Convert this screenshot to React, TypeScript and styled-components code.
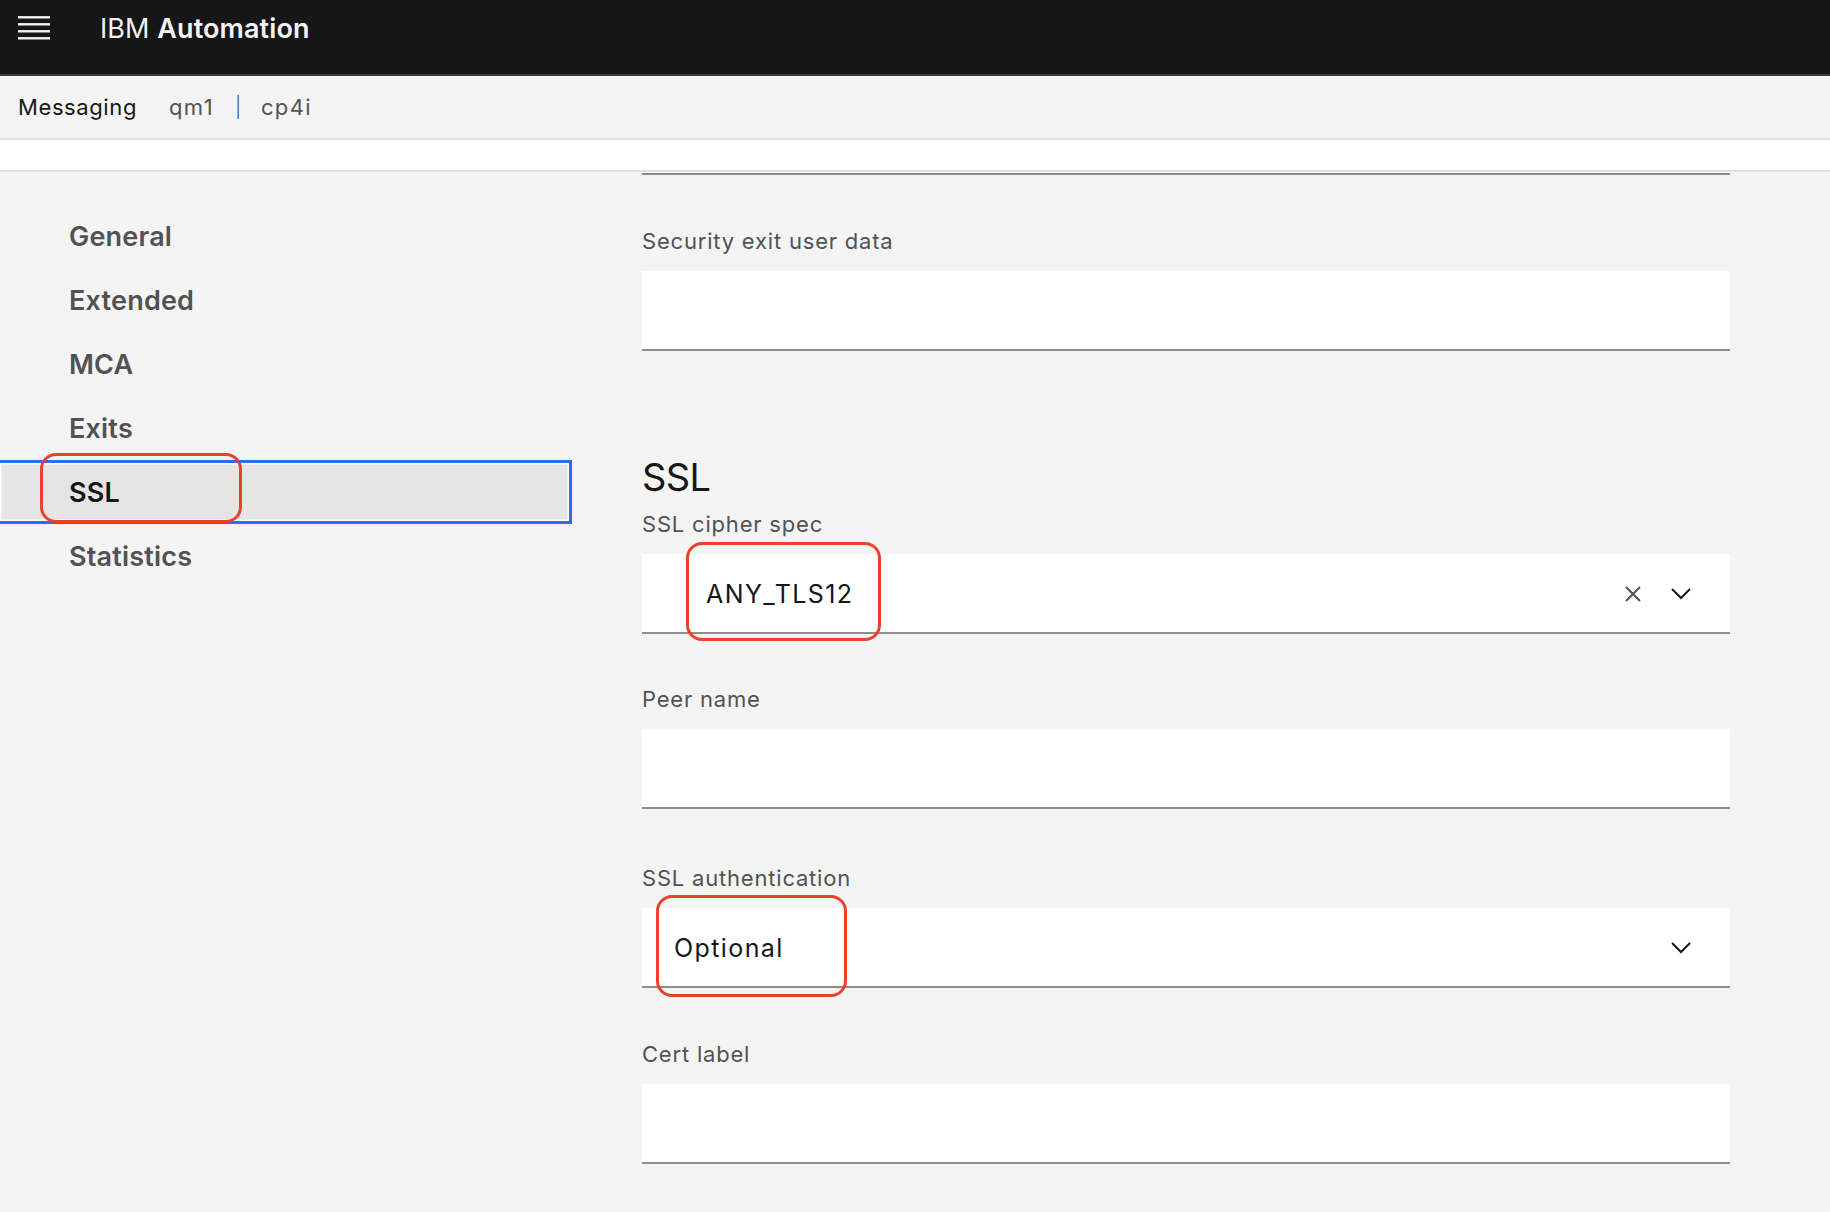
import React from "react";
import styled, { createGlobalStyle } from "styled-components";

const GlobalStyle = createGlobalStyle`
  html, body {
    margin: 0;
    padding: 0;
  }
  body {
    background: #f4f4f4;
    font-family: Inter, "Noto Sans", sans-serif;
    color: #161616;
  }
  * {
    box-sizing: border-box;
  }
`;

const Page = styled.div`
  width: 1830px;
  height: 1212px;
  overflow: hidden;
  display: flex;
  flex-direction: column;
  background: #f4f4f4;
`;

const Header = styled.header`
  flex: none;
  height: 76px;
  padding-bottom: 18px;
  background: #161616;
  border-bottom: 2px solid #393939;
  display: flex;
  align-items: center;
`;

const MenuIcon = styled.svg`
  margin-left: 18px;
  flex: none;
`;

const Brand = styled.div`
  margin-left: 50px;
  font-size: 27px;
  color: #f4f4f4;
  font-weight: 400;
  letter-spacing: 0.1px;

  strong {
    font-weight: 600;
  }
`;

const SubHeader = styled.div`
  flex: none;
  height: 64px;
  padding-left: 18px;
  border-bottom: 2px solid #e0e0e0;
  display: flex;
  align-items: center;
  font-size: 22px;
  letter-spacing: 0.6px;
`;

const Crumb = styled.span<{ $muted?: boolean }>`
  color: ${p => (p.$muted ? "#525252" : "#161616")};
  margin-right: ${p => (p.$muted ? "0" : "32px")};
  letter-spacing: ${p => (p.$muted ? "1.4px" : "0.6px")};
`;

const Pipe = styled.span`
  color: #525252;
  font-weight: 300;
  font-size: 20px;
  margin: 0 19px 0 21px;
`;

const Strip = styled.div`
  flex: none;
  height: 32px;
  background: #ffffff;
  border-bottom: 2px solid #e0e0e0;
`;

const Body = styled.div`
  flex: 1;
  display: flex;
`;

const Nav = styled.nav`
  width: 572px;
  flex: none;
  padding-top: 32px;
  display: flex;
  flex-direction: column;
`;

const NavItem = styled.div<{ $active?: boolean }>`
  position: relative;
  height: 64px;
  padding-left: 69px;
  display: flex;
  align-items: center;
  font-size: 27px;
  font-weight: 600;
  letter-spacing: 0.2px;
  color: ${p => (p.$active ? "#161616" : "#525252")};
  background: ${p => (p.$active ? "#e5e5e5" : "transparent")};
  border: ${p => (p.$active ? "3px solid #2b6cf6" : "none")};
  border-left: none;
  box-shadow: ${p => (p.$active ? "inset 0 0 0 1.5px #ffffff" : "none")};
`;

const Content = styled.main`
  width: 1158px;
  flex: none;
  padding-left: 70px;
  display: flex;
  flex-direction: column;
`;

const CutField = styled.div`
  margin-top: 1px;
  height: 2px;
  background: #8d8d8d;
`;

const Field = styled.div<{ $gap: number }>`
  margin-top: ${p => p.$gap}px;
  display: flex;
  flex-direction: column;
`;

const Label = styled.label`
  font-size: 22px;
  line-height: 30px;
  color: #525252;
  letter-spacing: 0.8px;
  margin-bottom: 15px;
`;

const Section = styled.h2`
  margin: 103px 0 9px;
  font-size: 38px;
  line-height: 46px;
  font-weight: 400;
  letter-spacing: -0.6px;
  color: #161616;
`;

const InputBox = styled.div<{ $indent?: number }>`
  position: relative;
  height: 80px;
  background: #ffffff;
  border-bottom: 2px solid #8d8d8d;
  display: flex;
  align-items: center;
  padding: 2px 39px 0 ${p => p.$indent ?? 32}px;
  font-size: 25px;
  color: #161616;
  letter-spacing: 1.4px;
`;

const Actions = styled.div`
  margin-left: auto;
  display: flex;
  align-items: center;
  gap: 30px;
`;

const Annotation = styled.span<{
  $left: number;
  $top: number;
  $width: number;
  $height: number;
}>`
  position: absolute;
  left: ${p => p.$left}px;
  top: ${p => p.$top}px;
  width: ${p => p.$width}px;
  height: ${p => p.$height}px;
  border: 3px solid #ea4128;
  border-radius: 16px;
  pointer-events: none;
`;

const Close = () => (
  <svg width="16" height="16" viewBox="0 0 16 16">
    <path
      d="M1 1 L15 15 M15 1 L1 15"
      stroke="#525252"
      strokeWidth="2"
      fill="none"
    />
  </svg>
);

const Chevron = () => (
  <svg width="20" height="12" viewBox="0 0 20 12">
    <path
      d="M1 1 L10 10 L19 1"
      stroke="#161616"
      strokeWidth="2"
      fill="none"
    />
  </svg>
);

const navItems = ["General", "Extended", "MCA", "Exits", "SSL", "Statistics"];

const App: React.FC = () => {
  return (
    <Page>
      <GlobalStyle />
      <Header>
        <MenuIcon width="32" height="24" viewBox="0 0 32 24">
          {[1.3, 8.3, 15.3, 22.3].map(y => (
            <rect key={y} x="0" y={y - 1.2} width="32" height="2.4" fill="#f4f4f4" />
          ))}
        </MenuIcon>
        <Brand>
          IBM <strong>Automation</strong>
        </Brand>
      </Header>
      <SubHeader>
        <Crumb>Messaging</Crumb>
        <Crumb $muted>qm1</Crumb>
        <Pipe>|</Pipe>
        <Crumb $muted>cp4i</Crumb>
      </SubHeader>
      <Strip />
      <Body>
        <Nav>
          {navItems.map(item => (
            <NavItem key={item} $active={item === "SSL"}>
              {item}
              {item === "SSL" && (
                <Annotation $left={40} $top={-10} $width={202} $height={70} />
              )}
            </NavItem>
          ))}
        </Nav>
        <Content>
          <CutField />
          <Field $gap={51}>
            <Label>Security exit user data</Label>
            <InputBox />
          </Field>
          <Section>SSL</Section>
          <Field $gap={0}>
            <Label>SSL cipher spec</Label>
            <InputBox $indent={64}>
              ANY_TLS12
              <Actions>
                <Close />
                <Chevron />
              </Actions>
              <Annotation $left={44} $top={-12} $width={195} $height={99} />
            </InputBox>
          </Field>
          <Field $gap={50}>
            <Label>Peer name</Label>
            <InputBox />
          </Field>
          <Field $gap={54}>
            <Label>SSL authentication</Label>
            <InputBox $indent={32}>
              Optional
              <Actions>
                <Chevron />
              </Actions>
              <Annotation $left={14} $top={-13} $width={191} $height={102} />
            </InputBox>
          </Field>
          <Field $gap={51}>
            <Label>Cert label</Label>
            <InputBox />
          </Field>
        </Content>
      </Body>
    </Page>
  );
};

export default App;
